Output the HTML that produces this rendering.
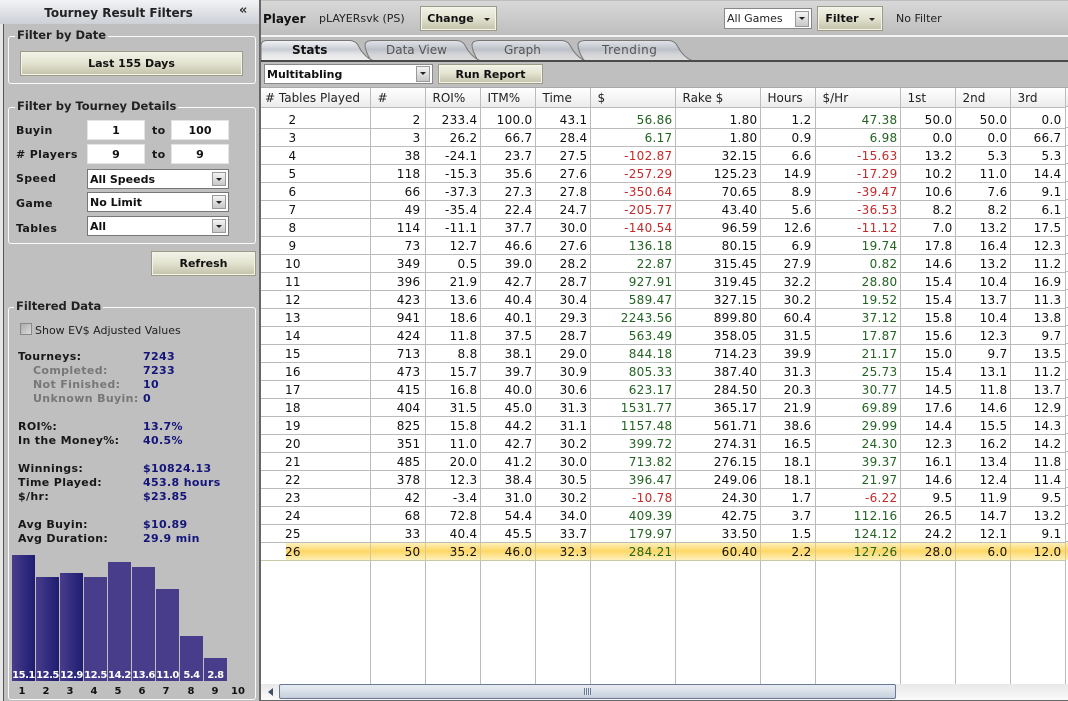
<!DOCTYPE html>
<html><head><meta charset="utf-8"><style>
*{box-sizing:border-box}
html,body{margin:0;padding:0;width:1068px;height:701px;overflow:hidden;background:#bdbdbd;font-family:"DejaVu Sans","Liberation Sans",sans-serif;font-size:11px;color:#111}
.a{position:absolute;white-space:nowrap}
.b{font-weight:bold}
.btn{position:absolute;border:1px solid #9c9c86;background:linear-gradient(#f3f3e8,#e4e4d2 45%,#c2c2aa);font-weight:bold;text-align:center;color:#111;box-shadow:inset 0 0 0 1px #f4f4ea}
.grp{position:absolute;border:1px solid #fafafa;border-radius:3px}
.leg{position:absolute;background:#bfbfbf;padding:0 2px;font-weight:bold;font-size:11.5px;line-height:14px;white-space:nowrap;color:#222}
.inp{position:absolute;background:#fff;border:1px solid #e4e4e4;text-align:center;font-weight:bold;line-height:20px;height:20px}
.sel{position:absolute;background:#fff;border:1px solid #777;font-weight:bold;height:20px;line-height:19px;padding-left:2px}
.sel i,.si{position:absolute;right:2px;top:2px;width:14px;height:14px;border:1px solid #999;background:linear-gradient(#f4f4f4,#c8c8c8)}
.sel i:after,.si:after{content:"";position:absolute;left:3px;top:5px;border:3px solid transparent;border-top:3px solid #222;border-bottom:0}
.car{display:inline-block;border:3px solid transparent;border-top:3px solid #222;border-bottom:0;vertical-align:middle;margin-left:10px}
.lb{position:absolute;font-weight:bold;line-height:14px;letter-spacing:.35px;white-space:nowrap;color:#181818}
.v{color:#14147a}.g{color:#777}
.bar{position:absolute;width:23px;background:#483d8b}
.bl{position:absolute;bottom:0;left:-1px;right:-1px;text-align:center;color:#fff;font-weight:bold;font-size:10px;line-height:11px;letter-spacing:-.5px}
.n{position:absolute;top:685px;width:24px;text-align:center;font-weight:bold;font-size:10px;line-height:13px}
table{position:absolute;left:261px;top:88px;border-collapse:collapse;table-layout:fixed;width:804px;font-size:12px;background:#fff}
th{height:19px;font-weight:normal;text-align:left;padding:2px 0 0 7px;line-height:15px;background:linear-gradient(#fff,#ececec);border-right:1px solid #bbb;border-bottom:1px solid #bbb;color:#222;font-size:12px;white-space:nowrap;overflow:hidden}
th:first-child{padding-left:4px}
td{height:18px;padding:2px 2px 0 0;text-align:right;border-right:1px solid #bbb;border-bottom:1px solid #bbb;line-height:15px;white-space:nowrap;color:#111;letter-spacing:.3px}
td:nth-child(2){padding-right:4px}
td:nth-child(8),td:nth-child(12){padding-right:3px}
td:first-child{text-align:left;padding-left:24px}
td:first-child span{display:inline-block;width:15px;text-align:center}
tr.f td{height:21px;padding-top:5px}
.p{color:#226322}.r{color:#c42a2a}
tr.h td{background:linear-gradient(#fff2c0,#fdd765 50%,#fff0b8);border-bottom:1px solid #c8c8a8;border-right:1px solid #d8c890}
tr.h td:first-child{background:none;padding:0;position:relative}
tr.h td:first-child b{display:block;font-weight:normal;margin-left:25px;height:17px;padding-top:2px;background:linear-gradient(#fff2c0,#fdd765 50%,#fff0b8)}
tr.h td:first-child span{margin-left:-1px}
</style></head><body>

<!-- Sidebar -->
<div class="a" style="left:0;top:0;width:260px;height:24px;background:linear-gradient(#f2f3f6,#cdd0d6)"></div>
<div class="a b" style="left:0;top:5px;width:237px;text-align:center;font-size:12px;line-height:16px;color:#222">Tourney Result Filters</div>
<div class="a b" style="left:239px;top:4px;font-size:13px;line-height:14px;color:#333">«</div>
<div class="a" style="left:3px;top:24px;width:1px;height:677px;background:#555"></div>
<div class="a" style="left:259px;top:0;width:2px;height:701px;background:#666"></div>
<div class="a" style="left:4px;top:24px;width:255px;height:677px;background:#bfbfbf"></div>
<div class="a" style="left:0;top:24px;width:3px;height:677px;background:#e6e6e6"></div>

<div class="grp" style="left:8px;top:36px;width:248px;height:48px"></div>
<div class="leg" style="left:15px;top:28px">Filter by Date</div>
<div class="btn" style="left:20px;top:51px;width:223px;height:25px;line-height:24px">Last 155 Days</div>

<div class="grp" style="left:8px;top:107px;width:248px;height:137px"></div>
<div class="leg" style="left:15px;top:99px">Filter by Tourney Details</div>
<div class="lb" style="left:16px;top:124px">Buyin</div>
<div class="inp" style="left:87px;top:120px;width:58px">1</div>
<div class="lb" style="left:152px;top:124px">to</div>
<div class="inp" style="left:171px;top:120px;width:58px">100</div>
<div class="lb" style="left:16px;top:148px"># Players</div>
<div class="inp" style="left:87px;top:144px;width:58px">9</div>
<div class="lb" style="left:152px;top:148px">to</div>
<div class="inp" style="left:171px;top:144px;width:58px">9</div>
<div class="lb" style="left:16px;top:172px">Speed</div>
<div class="sel" style="left:87px;top:169px;width:142px">All Speeds<i></i></div>
<div class="lb" style="left:16px;top:197px">Game</div>
<div class="sel" style="left:87px;top:192px;width:142px">No Limit<i></i></div>
<div class="lb" style="left:16px;top:222px">Tables</div>
<div class="sel" style="left:87px;top:216px;width:142px">All<i></i></div>
<div class="btn" style="left:151px;top:251px;width:105px;height:25px;line-height:24px">Refresh</div>

<div class="grp" style="left:8px;top:307px;width:248px;height:393px"></div>
<div class="leg" style="left:14px;top:299px">Filtered Data</div>
<div class="a" style="left:20px;top:323px;width:12px;height:12px;border:1px solid #888;background:linear-gradient(135deg,#aaa,#ddd)"></div>
<div class="a" style="left:35px;top:324px;line-height:14px;color:#222">Show EV$ Adjusted Values</div>

<div class="lb" style="left:18px;top:350px">Tourneys:</div><div class="lb v" style="left:143px;top:350px">7243</div>
<div class="lb g" style="left:33px;top:364px">Completed:</div><div class="lb v" style="left:143px;top:364px">7233</div>
<div class="lb g" style="left:33px;top:378px">Not Finished:</div><div class="lb v" style="left:143px;top:378px">10</div>
<div class="lb g" style="left:33px;top:392px">Unknown Buyin:</div><div class="lb v" style="left:143px;top:392px">0</div>
<div class="lb" style="left:18px;top:420px">ROI%:</div><div class="lb v" style="left:143px;top:420px">13.7%</div>
<div class="lb" style="left:18px;top:434px">In the Money%:</div><div class="lb v" style="left:143px;top:434px">40.5%</div>
<div class="lb" style="left:18px;top:462px">Winnings:</div><div class="lb v" style="left:143px;top:462px">$10824.13</div>
<div class="lb" style="left:18px;top:476px">Time Played:</div><div class="lb v" style="left:143px;top:476px">453.8 hours</div>
<div class="lb" style="left:18px;top:490px">$/hr:</div><div class="lb v" style="left:143px;top:490px">$23.85</div>
<div class="lb" style="left:18px;top:518px">Avg Buyin:</div><div class="lb v" style="left:143px;top:518px">$10.89</div>
<div class="lb" style="left:18px;top:532px">Avg Duration:</div><div class="lb v" style="left:143px;top:532px">29.9 min</div>

<div class="bar" style="left:12px;top:555px;height:126px;background:linear-gradient(90deg,#483d8b,#1e1c72)"><div class="bl">15.1</div></div>
<div class="bar" style="left:36px;top:577px;height:104px;background:linear-gradient(90deg,#483d8b,#1e1c72)"><div class="bl">12.5</div></div>
<div class="bar" style="left:60px;top:573px;height:108px;background:linear-gradient(90deg,#483d8b,#1e1c72)"><div class="bl">12.9</div></div>
<div class="bar" style="left:84px;top:577px;height:104px"><div class="bl">12.5</div></div>
<div class="bar" style="left:108px;top:562px;height:119px"><div class="bl">14.2</div></div>
<div class="bar" style="left:132px;top:567px;height:114px"><div class="bl">13.6</div></div>
<div class="bar" style="left:156px;top:589px;height:92px"><div class="bl">11.0</div></div>
<div class="bar" style="left:180px;top:636px;height:45px"><div class="bl">5.4</div></div>
<div class="bar" style="left:204px;top:658px;height:23px"><div class="bl">2.8</div></div>
<div class="n" style="left:10px">1</div><div class="n" style="left:34px">2</div><div class="n" style="left:58px">3</div><div class="n" style="left:82px">4</div><div class="n" style="left:106px">5</div><div class="n" style="left:130px">6</div><div class="n" style="left:154px">7</div><div class="n" style="left:179px">8</div><div class="n" style="left:203px">9</div><div class="n" style="left:226px">10</div>

<!-- Top bar -->
<div class="a" style="left:261px;top:1px;width:807px;height:35px;background:linear-gradient(#d8d8d8,#bdbdbd)"></div>
<div class="a" style="left:261px;top:35px;width:807px;height:2px;background:#f4f4f4"></div>
<div class="a b" style="left:263px;top:11px;font-size:12px;line-height:16px;color:#111">Player</div>
<div class="a" style="left:319px;top:12px;line-height:14px;color:#222">pLAYERsvk (PS)</div>
<div class="btn" style="left:420px;top:6px;width:77px;height:25px;line-height:24px">Change<span class="car"></span></div>
<div class="a" style="left:724px;top:8px;width:88px;height:21px;background:#fff;border:1px solid #888;line-height:20px;padding-left:2px;color:#222">All Games<span class="si" style="top:2px;height:16px"></span></div>
<div class="btn" style="left:817px;top:6px;width:66px;height:25px;line-height:24px">Filter<span class="car"></span></div>
<div class="a" style="left:896px;top:12px;line-height:14px;color:#222">No Filter</div>

<!-- Tabs -->
<div class="a" style="left:261px;top:37px;width:807px;height:24px;background:#bdbdbd"></div>
<svg class="a" style="left:260px;top:39px" width="440" height="23" viewBox="0 0 440 23">
<defs><linearGradient id="tg" x1="0" y1="0" x2="0" y2="1"><stop offset="0" stop-color="#e2e4e8"/><stop offset=".45" stop-color="#bcc0c8"/><stop offset=".7" stop-color="#d4d5d8"/><stop offset="1" stop-color="#dedede"/></linearGradient>
<linearGradient id="tw" x1="0" y1="0" x2="0" y2="1"><stop offset="0" stop-color="#f4f5f7"/><stop offset=".45" stop-color="#c8ccd4"/><stop offset=".7" stop-color="#e6e7e9"/><stop offset="1" stop-color="#f0f0f0"/></linearGradient></defs>
<path d="M432 21.5 C425 19 420 12 418 8 Q415 1.5 408 1.5 L326 1.5 Q318 1.5 318 6 Q318 12 324 21.5 Z" fill="url(#tg)" stroke="#777"/>
<path d="M325 21.5 C318 19 313 12 311 8 Q308 1.5 301 1.5 L220 1.5 Q212 1.5 212 6 Q212 12 218 21.5 Z" fill="url(#tg)" stroke="#777"/>
<path d="M220 21.5 C213 19 208 12 206 8 Q203 1.5 196 1.5 L113 1.5 Q105 1.5 105 6 Q105 12 111 21.5 Z" fill="url(#tg)" stroke="#777"/>
<path d="M113 21.5 C106 19 101 12 99 8 Q96 1.5 89 1.5 L7 1.5 Q1 1.5 1 7 L1 21.5 Z" fill="url(#tw)" stroke="#777"/>
</svg>
<div class="a b" style="left:292px;top:43px;font-size:12px;line-height:15px;color:#111">Stats</div>
<div class="a" style="left:386px;top:43px;font-size:12px;line-height:15px;color:#555">Data View</div>
<div class="a" style="left:504px;top:43px;font-size:12px;line-height:15px;color:#555">Graph</div>
<div class="a" style="left:602px;top:43px;font-size:12px;line-height:15px;letter-spacing:.5px;color:#555">Trending</div>
<div class="a" style="left:261px;top:60px;width:807px;height:2px;background:#4a4a4a"></div>
<div class="a" style="left:261px;top:62px;width:807px;height:25px;background:#bfbfbf"></div>

<div class="a b" style="left:264px;top:64px;width:169px;height:20px;background:#fff;border:1px solid #888;line-height:19px;padding-left:2px">Multitabling<span class="si" style="top:1px;height:16px"></span></div>
<div class="btn" style="left:438px;top:64px;width:105px;height:20px;line-height:19px">Run Report</div>
<div class="a" style="left:261px;top:87px;width:807px;height:1px;background:#aaa"></div>

<!-- Grid -->
<div class="a" style="left:261px;top:88px;width:807px;height:596px;background:#fff"></div>
<div class="a" style="left:370px;top:560px;width:1px;height:124px;background:#bbb"></div>
<div class="a" style="left:425px;top:560px;width:1px;height:124px;background:#bbb"></div>
<div class="a" style="left:480px;top:560px;width:1px;height:124px;background:#bbb"></div>
<div class="a" style="left:535px;top:560px;width:1px;height:124px;background:#bbb"></div>
<div class="a" style="left:590px;top:560px;width:1px;height:124px;background:#bbb"></div>
<div class="a" style="left:675px;top:560px;width:1px;height:124px;background:#bbb"></div>
<div class="a" style="left:760px;top:560px;width:1px;height:124px;background:#bbb"></div>
<div class="a" style="left:815px;top:560px;width:1px;height:124px;background:#bbb"></div>
<div class="a" style="left:900px;top:560px;width:1px;height:124px;background:#bbb"></div>
<div class="a" style="left:955px;top:560px;width:1px;height:124px;background:#bbb"></div>
<div class="a" style="left:1010px;top:560px;width:1px;height:124px;background:#bbb"></div>
<div class="a" style="left:1065px;top:560px;width:1px;height:124px;background:#bbb"></div>

<table>
<colgroup><col style="width:109px"><col style="width:55px"><col style="width:55px"><col style="width:55px"><col style="width:55px"><col style="width:85px"><col style="width:85px"><col style="width:55px"><col style="width:85px"><col style="width:55px"><col style="width:55px"><col style="width:55px"></colgroup>
<tr><th># Tables Played</th><th>#</th><th>ROI%</th><th>ITM%</th><th>Time</th><th>$</th><th>Rake $</th><th>Hours</th><th>$/Hr</th><th>1st</th><th>2nd</th><th>3rd</th></tr>
<tr class="f"><td><span>2</span></td><td>2</td><td>233.4</td><td>100.0</td><td>43.1</td><td class="p">56.86</td><td>1.80</td><td>1.2</td><td class="p">47.38</td><td>50.0</td><td>50.0</td><td>0.0</td></tr>
<tr><td><span>3</span></td><td>3</td><td>26.2</td><td>66.7</td><td>28.4</td><td class="p">6.17</td><td>1.80</td><td>0.9</td><td class="p">6.98</td><td>0.0</td><td>0.0</td><td>66.7</td></tr>
<tr><td><span>4</span></td><td>38</td><td>-24.1</td><td>23.7</td><td>27.5</td><td class="r">-102.87</td><td>32.15</td><td>6.6</td><td class="r">-15.63</td><td>13.2</td><td>5.3</td><td>5.3</td></tr>
<tr><td><span>5</span></td><td>118</td><td>-15.3</td><td>35.6</td><td>27.6</td><td class="r">-257.29</td><td>125.23</td><td>14.9</td><td class="r">-17.29</td><td>10.2</td><td>11.0</td><td>14.4</td></tr>
<tr><td><span>6</span></td><td>66</td><td>-37.3</td><td>27.3</td><td>27.8</td><td class="r">-350.64</td><td>70.65</td><td>8.9</td><td class="r">-39.47</td><td>10.6</td><td>7.6</td><td>9.1</td></tr>
<tr><td><span>7</span></td><td>49</td><td>-35.4</td><td>22.4</td><td>24.7</td><td class="r">-205.77</td><td>43.40</td><td>5.6</td><td class="r">-36.53</td><td>8.2</td><td>8.2</td><td>6.1</td></tr>
<tr><td><span>8</span></td><td>114</td><td>-11.1</td><td>37.7</td><td>30.0</td><td class="r">-140.54</td><td>96.59</td><td>12.6</td><td class="r">-11.12</td><td>7.0</td><td>13.2</td><td>17.5</td></tr>
<tr><td><span>9</span></td><td>73</td><td>12.7</td><td>46.6</td><td>27.6</td><td class="p">136.18</td><td>80.15</td><td>6.9</td><td class="p">19.74</td><td>17.8</td><td>16.4</td><td>12.3</td></tr>
<tr><td><span>10</span></td><td>349</td><td>0.5</td><td>39.0</td><td>28.2</td><td class="p">22.87</td><td>315.45</td><td>27.9</td><td class="p">0.82</td><td>14.6</td><td>13.2</td><td>11.2</td></tr>
<tr><td><span>11</span></td><td>396</td><td>21.9</td><td>42.7</td><td>28.7</td><td class="p">927.91</td><td>319.45</td><td>32.2</td><td class="p">28.80</td><td>15.4</td><td>10.4</td><td>16.9</td></tr>
<tr><td><span>12</span></td><td>423</td><td>13.6</td><td>40.4</td><td>30.4</td><td class="p">589.47</td><td>327.15</td><td>30.2</td><td class="p">19.52</td><td>15.4</td><td>13.7</td><td>11.3</td></tr>
<tr><td><span>13</span></td><td>941</td><td>18.6</td><td>40.1</td><td>29.3</td><td class="p">2243.56</td><td>899.80</td><td>60.4</td><td class="p">37.12</td><td>15.8</td><td>10.4</td><td>13.8</td></tr>
<tr><td><span>14</span></td><td>424</td><td>11.8</td><td>37.5</td><td>28.7</td><td class="p">563.49</td><td>358.05</td><td>31.5</td><td class="p">17.87</td><td>15.6</td><td>12.3</td><td>9.7</td></tr>
<tr><td><span>15</span></td><td>713</td><td>8.8</td><td>38.1</td><td>29.0</td><td class="p">844.18</td><td>714.23</td><td>39.9</td><td class="p">21.17</td><td>15.0</td><td>9.7</td><td>13.5</td></tr>
<tr><td><span>16</span></td><td>473</td><td>15.7</td><td>39.7</td><td>30.9</td><td class="p">805.33</td><td>387.40</td><td>31.3</td><td class="p">25.73</td><td>15.4</td><td>13.1</td><td>11.2</td></tr>
<tr><td><span>17</span></td><td>415</td><td>16.8</td><td>40.0</td><td>30.6</td><td class="p">623.17</td><td>284.50</td><td>20.3</td><td class="p">30.77</td><td>14.5</td><td>11.8</td><td>13.7</td></tr>
<tr><td><span>18</span></td><td>404</td><td>31.5</td><td>45.0</td><td>31.3</td><td class="p">1531.77</td><td>365.17</td><td>21.9</td><td class="p">69.89</td><td>17.6</td><td>14.6</td><td>12.9</td></tr>
<tr><td><span>19</span></td><td>825</td><td>15.8</td><td>44.2</td><td>31.1</td><td class="p">1157.48</td><td>561.71</td><td>38.6</td><td class="p">29.99</td><td>14.4</td><td>15.5</td><td>14.3</td></tr>
<tr><td><span>20</span></td><td>351</td><td>11.0</td><td>42.7</td><td>30.2</td><td class="p">399.72</td><td>274.31</td><td>16.5</td><td class="p">24.30</td><td>12.3</td><td>16.2</td><td>14.2</td></tr>
<tr><td><span>21</span></td><td>485</td><td>20.0</td><td>41.2</td><td>30.0</td><td class="p">713.82</td><td>276.15</td><td>18.1</td><td class="p">39.37</td><td>16.1</td><td>13.4</td><td>11.8</td></tr>
<tr><td><span>22</span></td><td>378</td><td>12.3</td><td>38.4</td><td>30.5</td><td class="p">396.47</td><td>249.06</td><td>18.1</td><td class="p">21.97</td><td>14.6</td><td>12.4</td><td>11.4</td></tr>
<tr><td><span>23</span></td><td>42</td><td>-3.4</td><td>31.0</td><td>30.2</td><td class="r">-10.78</td><td>24.30</td><td>1.7</td><td class="r">-6.22</td><td>9.5</td><td>11.9</td><td>9.5</td></tr>
<tr><td><span>24</span></td><td>68</td><td>72.8</td><td>54.4</td><td>34.0</td><td class="p">409.39</td><td>42.75</td><td>3.7</td><td class="p">112.16</td><td>26.5</td><td>14.7</td><td>13.2</td></tr>
<tr><td><span>25</span></td><td>33</td><td>40.4</td><td>45.5</td><td>33.7</td><td class="p">179.97</td><td>33.50</td><td>1.5</td><td class="p">124.12</td><td>24.2</td><td>12.1</td><td>9.1</td></tr>
<tr class="h"><td><b><span>26</span></b></td><td>50</td><td>35.2</td><td>46.0</td><td>32.3</td><td class="p">284.21</td><td>60.40</td><td>2.2</td><td class="p">127.26</td><td>28.0</td><td>6.0</td><td>12.0</td></tr>
</table>
<div class="a" style="left:1066px;top:88px;width:2px;height:19px;background:linear-gradient(#fff,#ececec);border-bottom:1px solid #bbb"></div>
<div class="a" style="left:1066px;top:110px;width:2px;height:432px;background:repeating-linear-gradient(#fff 0 17px,#bbb 17px 18px)"></div>
<div class="a" style="left:1066px;top:542px;width:2px;height:18px;background:linear-gradient(#fff2c0,#fdd765 50%,#fff0b8)"></div>

<!-- Scrollbar -->
<div class="a" style="left:261px;top:684px;width:807px;height:16px;background:linear-gradient(#e8e8e8,#fafafa)"></div>
<div class="a" style="left:261px;top:700px;width:807px;height:1px;background:#666"></div>
<div class="a" style="left:268px;top:688px;border:4px solid transparent;border-right:5px solid #3e5066;border-left:0"></div>
<div class="a" style="left:279px;top:684px;width:617px;height:15px;border:1px solid #6a7896;border-radius:2px;background:linear-gradient(#e6eaf0,#dfe4ec 35%,#c6cfdc)"></div>
<div class="a" style="left:584px;top:688px;width:7px;height:7px;background:repeating-linear-gradient(90deg,#6a7896 0 1px,#e6eaf0 1px 2px)"></div>
</body></html>
